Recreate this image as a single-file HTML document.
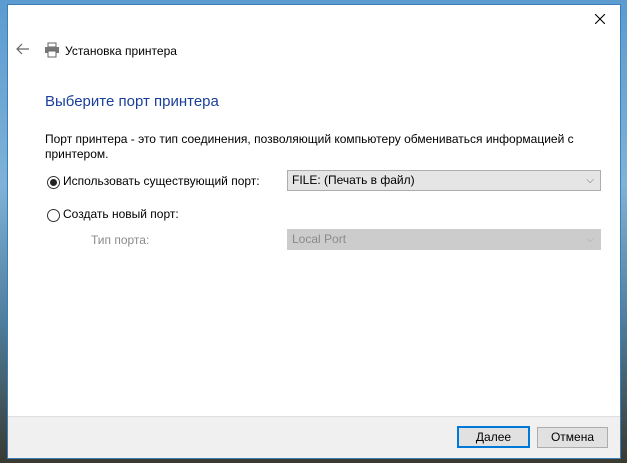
<!DOCTYPE html>
<html><head><meta charset="utf-8"><style>
body{margin:0;width:627px;height:463px;overflow:hidden;position:relative;font-family:"Liberation Sans","Noto Sans CJK SC",sans-serif;font-size:12px;color:#000;
background:linear-gradient(180deg,#5b9bd0 0%,#7fb2d8 40%,#4d7d9a 70%,#3a3a30 100%);}
.win{position:absolute;left:7px;top:4px;width:612px;height:453px;background:#fff;border:1px solid #3c7fb8;}
.foot{position:absolute;left:0;right:0;bottom:0;height:41px;background:#f0f0f0;border-top:1px solid #dfdfdf;}
.btn{position:absolute;top:10px;height:19px;width:69px;background:#e1e1e1;border:1px solid #adadad;text-align:center;line-height:19px;font-size:12px;}
.abs{position:absolute;white-space:nowrap;}
.sel{position:absolute;height:21px;border:1px solid #adadad;background:#e5e5e5;box-sizing:border-box;padding-left:4px;line-height:19px;}
.radio{position:absolute;width:11px;height:11px;border:1px solid #333;border-radius:50%;background:#fff;}
</style></head><body>
<div class="win">
<svg class="abs" style="left:587px;top:9px" width="10" height="10"><path d="M0 0L10 10M10 0L0 10" stroke="#000" stroke-width="1.1"/></svg>
<svg class="abs" style="left:8px;top:38px" width="14" height="12"><path d="M13 6H2M6 1L1 6l5 5" stroke="#666" stroke-width="1.2" fill="none"/></svg>
<svg class="abs" style="left:36px;top:37px" width="16" height="16"><rect x="4" y="1" width="8" height="4" fill="#fff" stroke="#666"/><rect x="1" y="5" width="14" height="6" fill="#777"/><rect x="4" y="9" width="8" height="6" fill="#fff" stroke="#666"/></svg>
<div class="abs" style="left:57px;top:39px;font-size:12px;">Установка принтера</div>
<div class="abs" style="left:37px;top:88px;font-size:15px;color:#1a3f9a;">Выберите порт принтера</div>
<div class="abs" style="left:37px;top:127px;">Порт принтера - это тип соединения, позволяющий компьютеру обмениваться информацией с</div>
<div class="abs" style="left:37px;top:142px;">принтером.</div>
<div class="radio" style="left:39px;top:171px;"><div style="position:absolute;left:2px;top:2px;width:7px;height:7px;border-radius:50%;background:#222"></div></div>
<div class="abs" style="left:55px;top:169px;">Использовать существующий порт:</div>
<div class="sel" style="left:279px;top:165px;width:314px;">FILE: (Печать в файл)<span style="position:absolute;right:6px;color:#666;font-size:10px">⌵</span></div>
<div class="radio" style="left:39px;top:204px;"></div>
<div class="abs" style="left:55px;top:202px;">Создать новый порт:</div>
<div class="abs" style="left:83px;top:228px;color:#8a8a8a;">Тип порта:</div>
<div class="sel" style="left:279px;top:224px;width:314px;color:#8a8a8a;background:#ccc;border-color:#ccc;">Local Port<span style="position:absolute;right:6px;color:#aaa;font-size:10px">⌵</span></div>
<div class="foot">
<div class="btn" style="left:449px;border:2px solid #0078d7;top:9px;height:18px;line-height:18px;">Далее</div>
<div class="btn" style="left:529px;">Отмена</div>
</div>
</div>
</body></html>
